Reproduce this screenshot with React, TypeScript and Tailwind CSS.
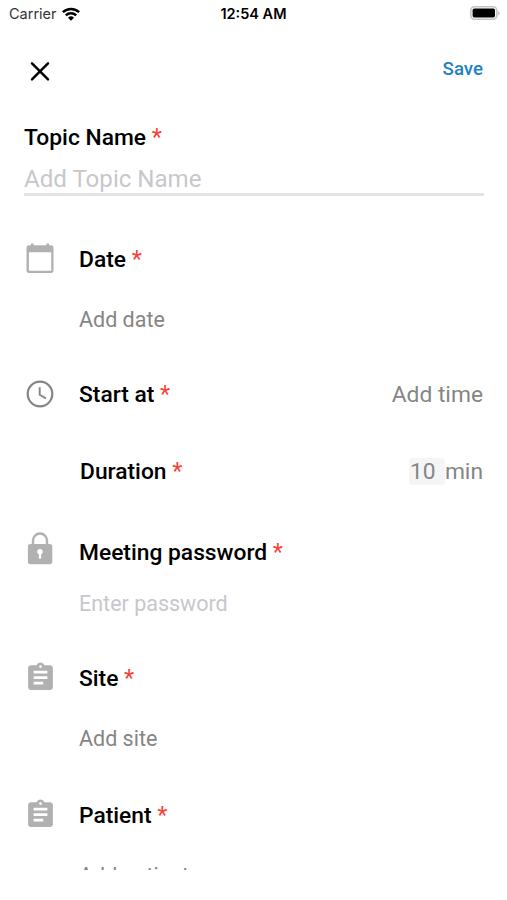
import type { ReactNode } from "react";
import { useState } from "react";

function WifiIcon() {
  return (
    <svg className="h-[14px] w-[18px]" viewBox="0 0 18 14">
      <g fill="none" stroke="#000" strokeWidth="2.5">
        <path d="M0.9 5.2a11.6 11.6 0 0 1 16.2 0" />
        <path d="M3.8 8.4a7.4 7.4 0 0 1 10.4 0" />
      </g>
      <path d="M9 13.8L6 10.8a4.3 4.3 0 0 1 6 0z" fill="#000" />
    </svg>
  );
}

function BatteryIcon() {
  return (
    <svg className="-mt-0.5 h-[14px] w-[30px]" viewBox="0 0 30 14">
      <rect x="0.8" y="0.8" width="26" height="12.4" rx="3.6" fill="#fff" stroke="#c4c4c4" strokeWidth="1.6" />
      <rect x="2.6" y="2.6" width="22.4" height="8.8" rx="1.6" fill="#000" />
      <path d="M28.4 5v4.4c1.6-.7 1.6-3.7 0-4.4z" fill="#a6a6a6" />
    </svg>
  );
}

function CloseIcon() {
  return (
    <svg className="h-8 w-8" viewBox="0 0 32 32" fill="none" stroke="#000" strokeWidth="2.5" strokeLinecap="round">
      <path d="M8 8.300l16 16M24 8.300l-16 16" />
    </svg>
  );
}

function CalendarIcon() {
  return (
    <svg className="h-8 w-8" viewBox="0 0 32 32">
      <path
        fill="#b1b1b1"
        fillRule="evenodd"
        d="M7 .4h2.6v1.8h12.8V.4H25v1.8h2.2a2.3 2.3 0 0 1 2.3 2.3v23.3a2.3 2.3 0 0 1-2.3 2.3H4.8a2.3 2.3 0 0 1-2.3-2.3V4.5a2.3 2.3 0 0 1 2.3-2.3H7zM4.9 9.3v18.500h22.300V9.300z"
      />
    </svg>
  );
}

function ClockIcon() {
  return (
    <svg className="h-8 w-8" viewBox="0 0 32 32" fill="none" stroke="#858585">
      <circle cx="16" cy="16" r="12.3" strokeWidth="2.2" />
      <path d="M15.7 9.2v7.6l6.2 3.6" strokeWidth="1.9" />
    </svg>
  );
}

function LockIcon() {
  return (
    <svg className="-mt-2 h-9 w-8" viewBox="0 0 32 36">
      <path d="M9 17v-6.5a7 7 0 0 1 14 0V17" fill="none" stroke="#b1b1b1" strokeWidth="2.4" />
      <rect x="3.9" y="14" width="24.4" height="20.2" rx="2.6" fill="#b1b1b1" />
      <circle cx="16" cy="21.8" r="2.7" fill="#fff" />
      <path d="M14.9 22h2.2v6.6h-2.200z" fill="#fff" />
    </svg>
  );
}

function ClipboardIcon() {
  return (
    <svg className="-mt-px h-[33px] w-[33px] shrink-0" viewBox="0 0 24 24" fill="#b1b1b1">
      <path d="M19 3h-4.180C14.400 1.840 13.300 1 12 1c-1.300 0-2.400.84-2.820 2H5c-1.100 0-2 .9-2 2v14c0 1.100.9 2 2 2h14c1.100 0 2-.9 2-2V5c0-1.100-.9-2-2-2zm-7 0c.55 0 1 .45 1 1s-.45 1-1 1-1-.45-1-1 .45-1 1-1zm2 14H7v-2h7v2zm3-4H7v-2h10v2zm0-4H7V7h10v2z" />
    </svg>
  );
}

function Label({ children }: { children: ReactNode }) {
  return (
    <span className="whitespace-nowrap font-medium text-black">
      {children} <span className="text-[23.5px] font-normal text-[#f9423a]">*</span>
    </span>
  );
}

interface RowProps {
  icon?: ReactNode;
  label: string;
  className: string;
  children?: ReactNode;
}

function Row({ icon, label, className, children }: RowProps) {
  return (
    <div className={`flex h-8 items-center ${className}`}>
      <div className="flex w-8 shrink-0 justify-center">{icon}</div>
      <div className="ml-[23px] flex h-8 flex-1 items-center justify-between">
        <Label>{label}</Label>
        {children}
      </div>
    </div>
  );
}

function Value({ children }: { children: ReactNode }) {
  return <p className="ml-[55px] mt-7 h-8 pt-px text-[21.5px] text-[#858585]">{children}</p>;
}

export default function App() {
  const [topic, setTopic] = useState("");
  const [password, setPassword] = useState("");

  return (
    <div className="h-[900px] w-[507px] overflow-hidden bg-white font-['Roboto',sans-serif]">
      {/* Status bar */}
      <div className="grid h-7 grid-cols-3 items-center pl-[9px] pr-[7px] font-['Inter',sans-serif] text-[14.5px] leading-7 text-black">
        <div className="flex items-center gap-[5px] text-[#333]">
          <span>Carrier</span>
          <WifiIcon />
        </div>
        <div className="-ml-0.5 text-center font-semibold">12:54 AM</div>
        <div className="flex justify-end">
          <BatteryIcon />
        </div>
      </div>

      <div className="h-[842px] overflow-hidden px-6 text-[22.8px] leading-8">
        {/* Header */}
        <header className="flex h-[93px] items-start justify-between pt-[27px]">
          <button aria-label="Close">
            <CloseIcon />
          </button>
          <button className="h-7 text-[18.7px] font-medium leading-7 text-[#1d82c4]">Save</button>
        </header>

        <div className="h-8">
          <Label>Topic Name</Label>
        </div>
        <input
          value={topic}
          onChange={(e) => setTopic(e.target.value)}
          placeholder="Add Topic Name"
          className="mt-[10px] block h-[33px] w-[460px] border-b-[3px] border-[#e3e3e3] pt-0.5 text-[24.1px] text-black outline-none placeholder:text-[#c7c7cc]"
        />

        <Row icon={<CalendarIcon />} label="Date" className="mt-[47px]" />
        <Value>Add date</Value>

        <Row icon={<ClockIcon />} label="Start at" className="mt-[43px]">
          <span className="pt-0.5 text-[#858585]">Add time</span>
        </Row>

        {/* Duration has no icon and sits slightly further in */}
        <div className="mt-[45px] flex h-8 items-center justify-between pl-[56px]">
          <Label>Duration</Label>
          <span className="flex items-center text-[#858585]">
            <span className="h-[27px] w-9 rounded-sm bg-[#f5f5f8] pl-px leading-[27px]">10</span>
            <span className="pt-0.5">min</span>
          </span>
        </div>

        <Row icon={<LockIcon />} label="Meeting password" className="mt-[49px]" />
        <input
          value={password}
          onChange={(e) => setPassword(e.target.value)}
          placeholder="Enter password"
          className="ml-[55px] mt-[19px] block h-8 w-[400px] pt-0.5 text-[21.5px] text-black outline-none placeholder:text-[#c7c7cc]"
        />

        <Row icon={<ClipboardIcon />} label="Site" className="mt-[43px]" />
        <Value>Add site</Value>

        <Row icon={<ClipboardIcon />} label="Patient" className="mt-[45px]" />
        <Value>Add patient</Value>
      </div>
    </div>
  );
}
